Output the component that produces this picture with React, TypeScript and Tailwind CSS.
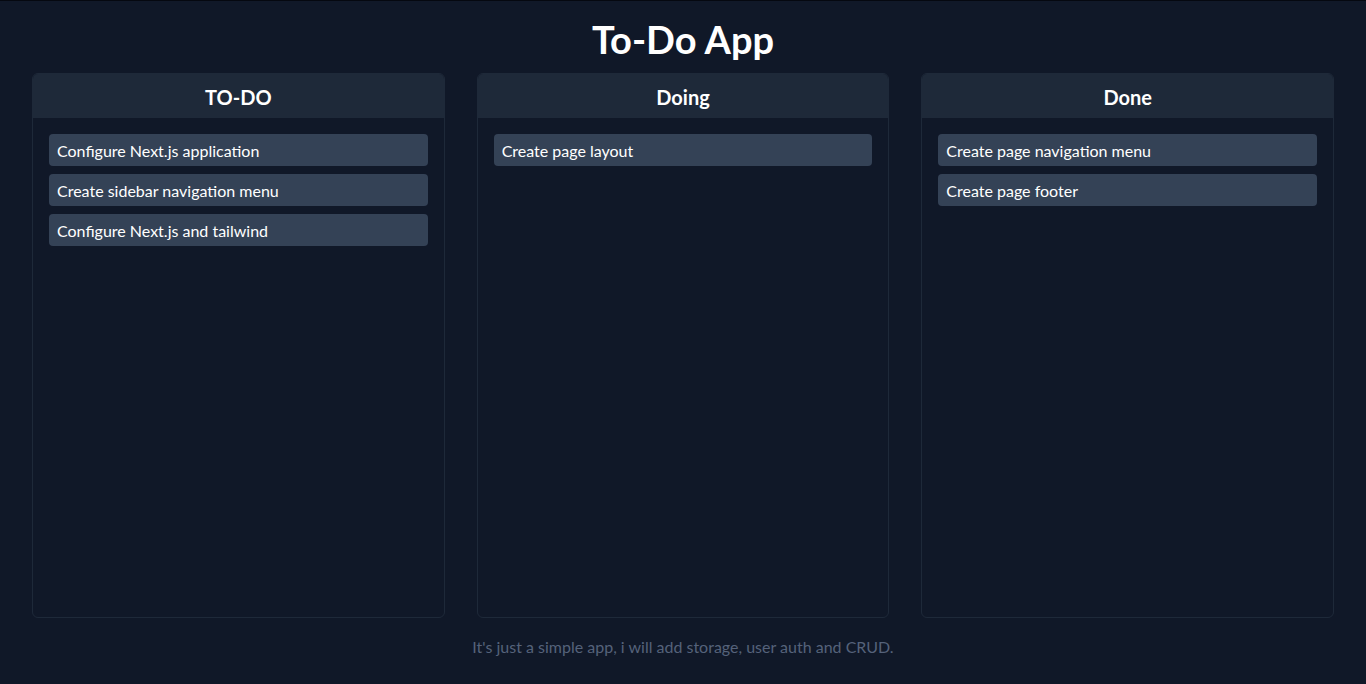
const columns = [
  {
    title: "TO-DO",
    items: [
      "Configure Next.js application",
      "Create sidebar navigation menu",
      "Configure Next.js and tailwind",
    ],
  },
  { title: "Doing", items: ["Create page layout"] },
  {
    title: "Done",
    items: ["Create page navigation menu", "Create page footer"],
  },
];

export default function App() {
  return (
    <main
      className="h-screen flex flex-col bg-[#101828] text-white border-t border-[#050810] overflow-hidden"
      style={{ fontFamily: "Lato, 'Open Sans', sans-serif" }}
    >
      <h1 className="pt-[18px] h-[59px] mb-[13px] text-[38px] font-bold text-center leading-10">
        To-Do App
      </h1>

      <div className="flex-1 grid grid-cols-3 gap-8 px-8">
        {columns.map((col) => (
          <div
            key={col.title}
            className="border border-[#1e2939] rounded-md flex flex-col overflow-hidden"
          >
            <div className="bg-[#1e2939] pt-[9px] pb-[7px] text-xl font-bold text-center leading-7">
              {col.title}
            </div>
            <div className="p-4 flex flex-col gap-2">
              {col.items.map((item) => (
                <div
                  key={item}
                  className="bg-[#344256] rounded px-2 pt-[5px] pb-[3px] text-base leading-6"
                >
                  {item}
                </div>
              ))}
            </div>
          </div>
        ))}
      </div>

      <p className="pt-[19px] pb-[27px] text-center text-base leading-5 text-[#55627a]">
        It's just a simple app, i will add storage, user auth and CRUD.
      </p>
    </main>
  );
}
